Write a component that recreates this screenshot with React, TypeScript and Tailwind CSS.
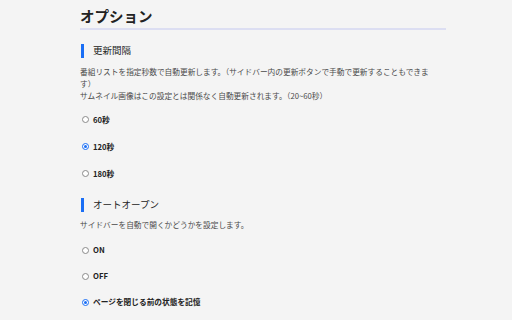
import React from "react";

type Option = { label: string; checked?: boolean };

const intervalOptions: Option[] = [
  { label: "60秒" },
  { label: "120秒", checked: true },
  { label: "180秒" },
];

const openOptions: Option[] = [
  { label: "ON" },
  { label: "OFF" },
  { label: "ページを閉じる前の状態を記憶", checked: true },
];

function Radio({ option, rowClass }: { option: Option; rowClass: string }) {
  return (
    <label className={`flex items-center gap-[4px] pl-[2px] ${rowClass}`}>
      {option.checked ? (
        <span className="flex h-[7px] w-[7px] items-center justify-center rounded-full border border-[#1a6ef5] bg-white">
          <span className="h-[3px] w-[3px] rounded-full bg-[#1a6ef5]"></span>
        </span>
      ) : (
        <span className="h-[7px] w-[7px] rounded-full border border-[#8a8a8a] bg-white"></span>
      )}
      <span className="text-[7.7px] font-bold leading-none text-[#222]">{option.label}</span>
    </label>
  );
}

function SectionTitle({ children }: { children: React.ReactNode }) {
  return (
    <h2 className="ml-[1px] flex h-[14px] items-center border-l-[3px] border-[#1a6ef5] pl-[9px] text-[9.5px] leading-none text-[#222]">
      {children}
    </h2>
  );
}

export default function App() {
  return (
    <div className="min-h-[320px] bg-[#f4f4f4] font-['Noto_Sans_CJK_JP',sans-serif]">
      <div className="ml-[80px] w-[366px]">
        {/* タイトル */}
        <h1 className="border-b-2 border-[#dcdef2] pb-[2px] pt-[6px] text-[14.5px] font-bold leading-[20px] text-[#222]">
          オプション
        </h1>

        {/* 更新間隔 */}
        <section className="mt-[14px]">
          <SectionTitle>更新間隔</SectionTitle>
          <p className="mt-[8px] w-[358px] text-[7.7px] leading-[12px] text-[#4a4a4a]">
            番組リストを指定秒数で自動更新します。（サイドバー内の更新ボタンで手動で更新することもできます）
            <br />
            サムネイル画像はこの設定とは関係なく自動更新されます。（20~60秒）
          </p>
          <div className="mt-[4px] flex flex-col">
            {intervalOptions.map((o) => (
              <Radio key={o.label} option={o} rowClass="h-[27px]" />
            ))}
          </div>
        </section>

        {/* オートオープン */}
        <section className="mt-[11px]">
          <SectionTitle>オートオープン</SectionTitle>
          <p className="mt-[7px] text-[7.7px] leading-[12px] text-[#4a4a4a]">
            サイドバーを自動で開くかどうかを設定します。
          </p>
          <div className="mt-[6px] flex flex-col">
            {openOptions.map((o) => (
              <Radio key={o.label} option={o} rowClass="h-[26px]" />
            ))}
          </div>
        </section>
      </div>
    </div>
  );
}
